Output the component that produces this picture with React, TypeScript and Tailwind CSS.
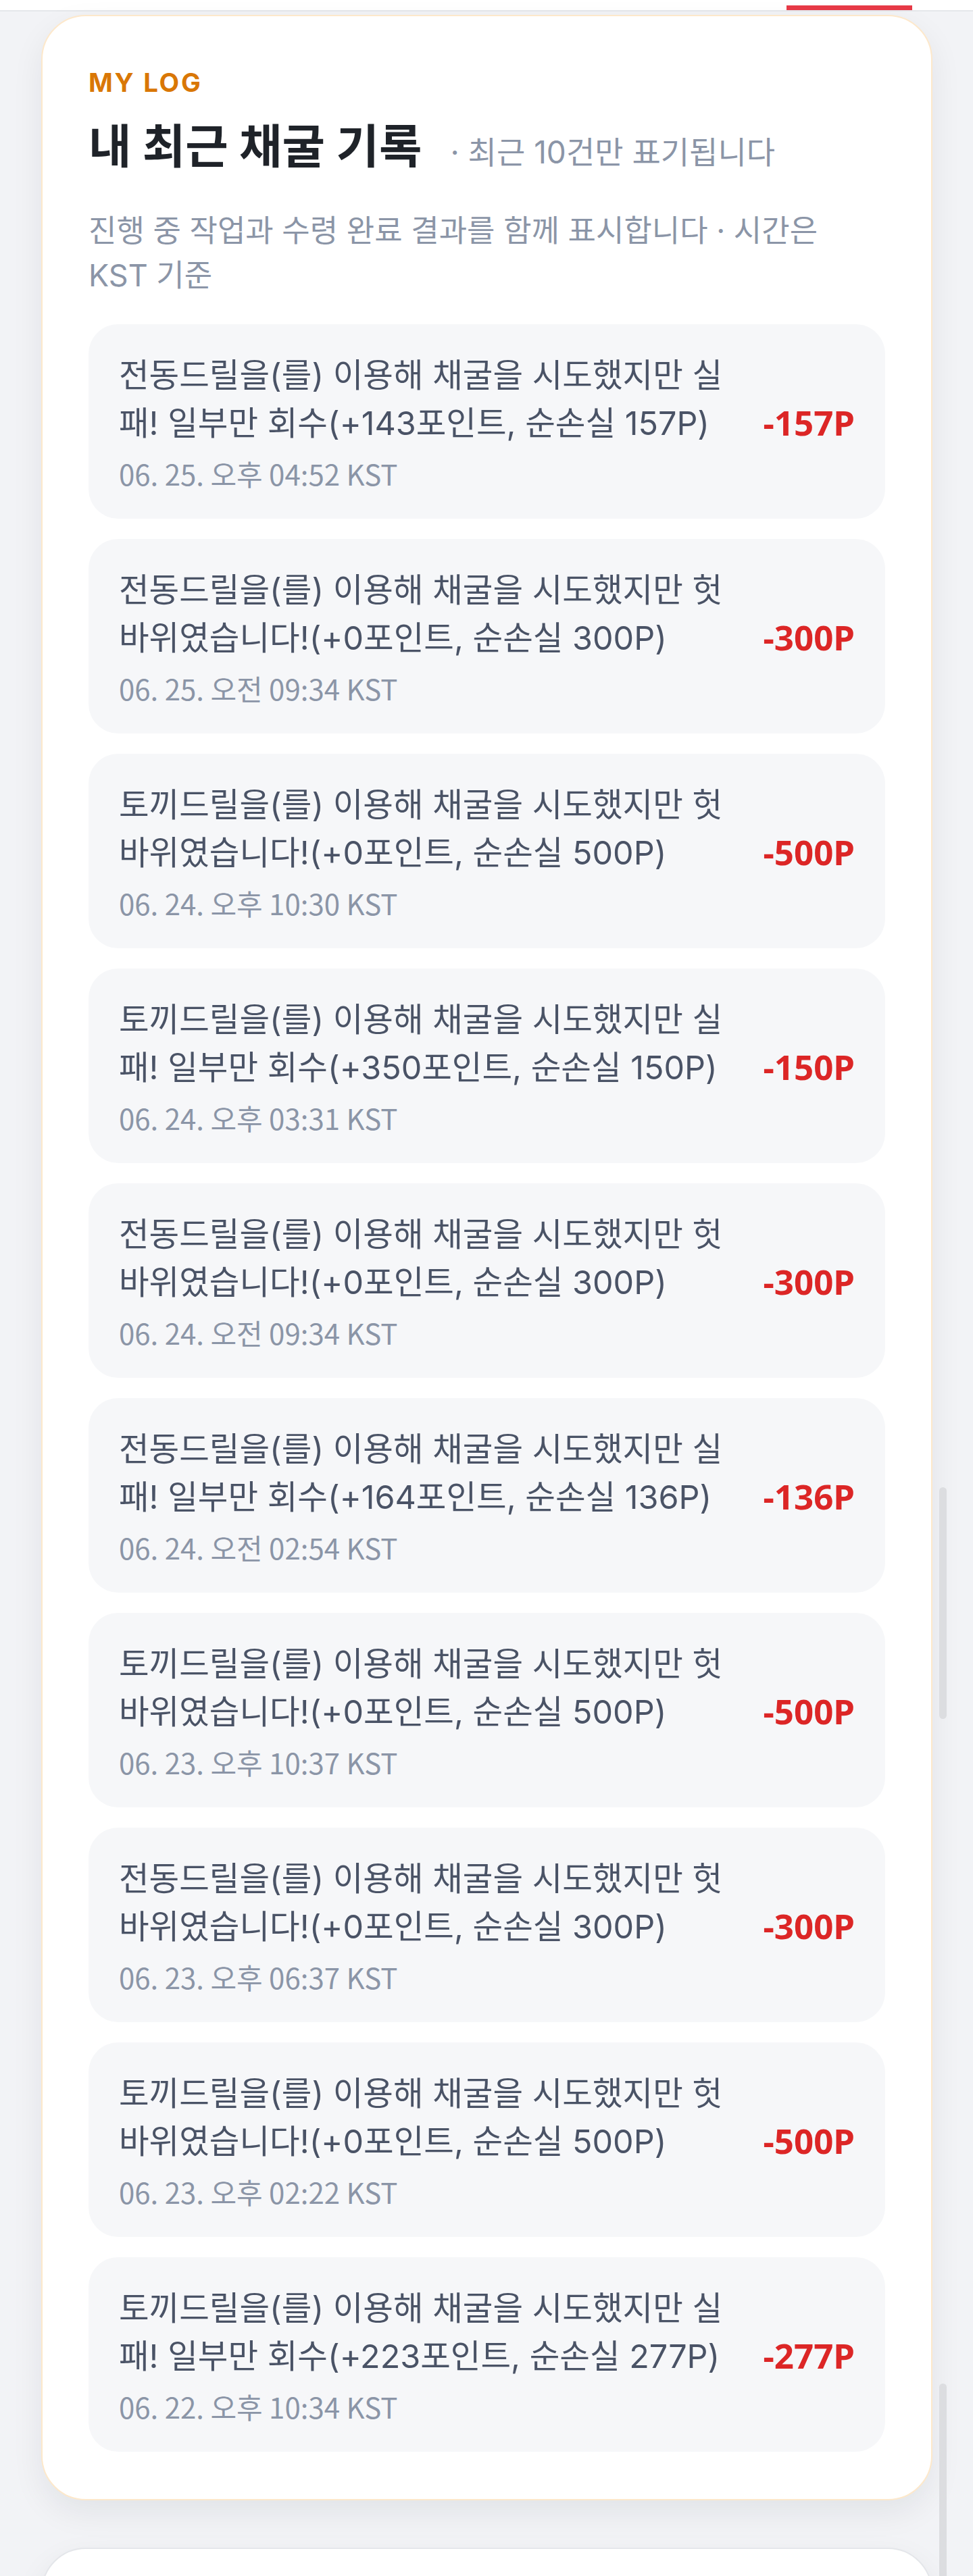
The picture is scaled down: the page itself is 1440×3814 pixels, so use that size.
import React from "react";

type Log = { text: string; amount: string; time: string };

const logs: Log[] = [
  { text: "전동드릴을(를) 이용해 채굴을 시도했지만 실패! 일부만 회수(+143포인트, 순손실 157P)", amount: "-157P", time: "06. 25. 오후 04:52 KST" },
  { text: "전동드릴을(를) 이용해 채굴을 시도했지만 헛바위였습니다!(+0포인트, 순손실 300P)", amount: "-300P", time: "06. 25. 오전 09:34 KST" },
  { text: "토끼드릴을(를) 이용해 채굴을 시도했지만 헛바위였습니다!(+0포인트, 순손실 500P)", amount: "-500P", time: "06. 24. 오후 10:30 KST" },
  { text: "토끼드릴을(를) 이용해 채굴을 시도했지만 실패! 일부만 회수(+350포인트, 순손실 150P)", amount: "-150P", time: "06. 24. 오후 03:31 KST" },
  { text: "전동드릴을(를) 이용해 채굴을 시도했지만 헛바위였습니다!(+0포인트, 순손실 300P)", amount: "-300P", time: "06. 24. 오전 09:34 KST" },
  { text: "전동드릴을(를) 이용해 채굴을 시도했지만 실패! 일부만 회수(+164포인트, 순손실 136P)", amount: "-136P", time: "06. 24. 오전 02:54 KST" },
  { text: "토끼드릴을(를) 이용해 채굴을 시도했지만 헛바위였습니다!(+0포인트, 순손실 500P)", amount: "-500P", time: "06. 23. 오후 10:37 KST" },
  { text: "전동드릴을(를) 이용해 채굴을 시도했지만 헛바위였습니다!(+0포인트, 순손실 300P)", amount: "-300P", time: "06. 23. 오후 06:37 KST" },
  { text: "토끼드릴을(를) 이용해 채굴을 시도했지만 헛바위였습니다!(+0포인트, 순손실 500P)", amount: "-500P", time: "06. 23. 오후 02:22 KST" },
  { text: "토끼드릴을(를) 이용해 채굴을 시도했지만 실패! 일부만 회수(+223포인트, 순손실 277P)", amount: "-277P", time: "06. 22. 오후 10:34 KST" },
];

function LogItem({ log }: { log: Log }) {
  return (
    <li className="flex items-center gap-[30px] rounded-[44px] bg-[#f6f7f9] pb-[37px] pl-[45px] pr-[45px] pt-[40px]">
      <div className="min-w-0 flex-1">
        <p className="text-[48.5px] leading-[71px] text-[#4a5366]">{log.text}</p>
        <p className="mt-[9px] font-['Noto_Sans_CJK_KR',sans-serif] text-[42px] leading-[60px] text-[#8b95a7]">
          {log.time}
        </p>
      </div>
      <span className="w-[140px] shrink-0 text-right font-['Noto_Sans','Noto_Sans_CJK_KR',sans-serif] text-[51px] font-bold leading-[51px] text-[#dc2626]">
        {log.amount}
      </span>
    </li>
  );
}

export default function App() {
  return (
    <div className="relative h-[3814px] overflow-hidden bg-[#f2f3f6] font-['Inter','Noto_Sans_CJK_KR',sans-serif]">
      <header className="flex h-[17px] border-b-2 border-[#e5e7eb] bg-white">
        <div className="ml-[1164px] mt-auto h-[7px] w-[186px] bg-[#e63946]" />
      </header>

      <main className="pl-[61px] pr-[60px] pt-[5px]">
        <section className="rounded-[66px] border-2 border-[#fde8cb] bg-white px-[68px] pb-[70px] pt-[70px] shadow-[0_18px_48px_rgba(15,23,42,0.07)]">
          <p className="text-[38.5px] font-bold leading-[56px] tracking-[0.07em] text-[#d97706]">MY LOG</p>
          <div className="mt-[27px] flex items-baseline">
            <h2 className="text-[69px] font-bold leading-[80px] text-[#1f2329]">내 최근 채굴 기록</h2>
            <span className="ml-[42px] text-[46px] leading-[80px] text-[#8b95a7]">· 최근 10건만 표기됩니다</span>
          </div>
          <p className="mt-[44px] max-w-[1130px] text-[45px] leading-[66px] text-[#8b95a7]">
            진행 중 작업과 수령 완료 결과를 함께 표시합니다 · 시간은 KST 기준
          </p>
          <ul className="mt-[39px] flex flex-col gap-[30px]">
            {logs.map((log, i) => (
              <LogItem key={i} log={log} />
            ))}
          </ul>
        </section>

        <section className="mt-[70px] h-[400px] rounded-[66px] border-2 border-[#e4e6ea] bg-white shadow-[0_18px_48px_rgba(15,23,42,0.07)]" />
      </main>

      <div className="absolute left-[1390px] top-[2202px] h-[343px] w-[11px] rounded-full bg-[#dcdde0]" />
      <div className="absolute left-[1390px] top-[3529px] h-[400px] w-[11px] rounded-full bg-[#dcdde0]" />
    </div>
  );
}
